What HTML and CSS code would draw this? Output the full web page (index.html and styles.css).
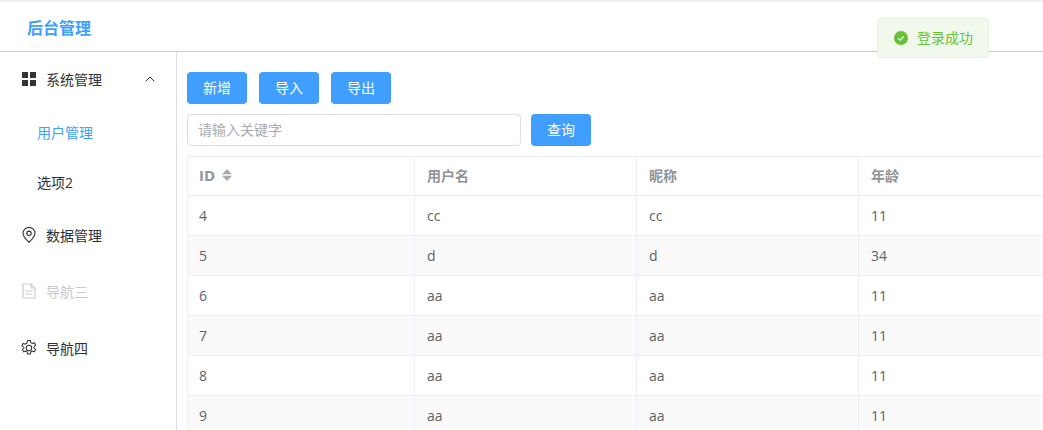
FILE: index.html
```html
<!DOCTYPE html>
<html lang="zh">
<head>
<meta charset="utf-8">
<title>后台管理</title>
<link rel="stylesheet" href="styles.css">
</head>
<body>
<div class="app">
  <header class="header"><span class="brand">后台管理</span></header>
  <div class="toast">
    <svg class="toast-icon" viewBox="0 0 14 14"><circle cx="7" cy="7" r="7" fill="#67c23a"/><path d="M4.2 7.2l2 1.9 3.6-3.6" fill="none" stroke="#f0f9eb" stroke-width="1.3"/></svg>
    <span class="toast-text">登录成功</span>
  </div>
  <div class="body">
    <nav class="side">
      <div class="menu">
      <div class="menu-item">
        <svg class="icon icon-grid" viewBox="0 0 14 14"><path fill="#333" d="M0 0h6v6H0zM8 0h6v6H8zM0 8h6v6H0zM8 8h6v6H8z"/></svg>
        <span class="grow">系统管理</span>
        <svg class="chev" viewBox="0 0 10 6"><path d="M.7 5.3L5 1l4.3 4.3" fill="none" stroke="#333" stroke-width="1"/></svg>
      </div>
      <div class="sub-item active">用户管理</div>
      <div class="sub-item">选项2</div>
      <div class="menu-item">
        <svg class="icon" viewBox="0 0 14 16"><path fill="none" stroke="#333" stroke-width="1.1" d="M7 15.300C4.600 12.800 1 9.800 1 6.200a6 5.700 0 0 1 12 0C13 9.800 9.400 12.800 7 15.300z"/><circle cx="7" cy="6.300" r="2.200" fill="none" stroke="#333" stroke-width="1.1"/></svg>
        <span>数据管理</span>
      </div>
      <div class="menu-item disabled">
        <svg class="icon" viewBox="0 0 14 16"><path fill="none" stroke="#ccc" stroke-width="1.200" d="M1 1h8l4 4v10H1zM9 1v4h4M3.500 8h7M3.500 11h7"/></svg>
        <span>导航三</span>
      </div>
      <div class="menu-item last">
        <svg class="icon" viewBox="0.5 0.200 15 15.400"><path fill="none" stroke="#333" stroke-width="1" d="M6.700 .7h2.600l.4 2 1.500.8 1.900-.7 1.300 2.300-1.500 1.300v1.600l1.500 1.300-1.300 2.300-1.900-.7-1.500.8-.4 2H6.700l-.4-2-1.500-.8-1.900.7-1.300-2.300 1.500-1.300V7.100L1.100 5.800l1.300-2.300 1.900.7 1.500-.8z"/><circle cx="8" cy="7.900" r="2.600" fill="none" stroke="#333" stroke-width="1"/></svg>
        <span>导航四</span>
      </div>
      </div>
    </nav>
    <main class="main">
      <div class="toolbar">
        <button class="btn">新增</button>
        <button class="btn">导入</button>
        <button class="btn">导出</button>
      </div>
      <div class="search">
        <input class="input" placeholder="请输入关键字">
        <button class="btn">查询</button>
      </div>
      <table class="table">
        <colgroup><col class="c1"><col class="c2"><col class="c3"><col class="c4"></colgroup>
        <thead>
          <tr>
            <th><span class="id-head">ID<svg class="sort" viewBox="0 0 10 12"><path fill="#a8abb2" d="M5 0l5 5.300H0zM5 12L0 6.700h10z"/></svg></span></th>
            <th>用户名</th><th>昵称</th><th>年龄</th>
          </tr>
        </thead>
        <tbody>
          <tr><td>4</td><td>cc</td><td>cc</td><td>11</td></tr>
          <tr><td>5</td><td>d</td><td>d</td><td>34</td></tr>
          <tr><td>6</td><td>aa</td><td>aa</td><td>11</td></tr>
          <tr><td>7</td><td>aa</td><td>aa</td><td>11</td></tr>
          <tr><td>8</td><td>aa</td><td>aa</td><td>11</td></tr>
          <tr><td>9</td><td>aa</td><td>aa</td><td>11</td></tr>
        </tbody>
      </table>
    </main>
  </div>
</div>
</body>
</html>
```
FILE: styles.css
```css
* { box-sizing: border-box; }
html, body { margin: 0; height: 100%; overflow: hidden; background: #fff; }
body { font-family: "Open Sans", "Noto Sans CJK SC", sans-serif; font-size: 14px; color: #303133; }
.app { position: relative; height: 430px; border-top: 2px solid #f0f0f0; }
.header { height: 50px; border-bottom: 1px solid #ccc; padding-left: 27px; display: flex; align-items: center; }
.brand { color: #409eff; font-size: 16px; font-weight: 700; }
.toast { position: absolute; left: 877px; top: 16px; width: 112px; height: 40px; display: flex; align-items: center; padding-left: 16px; gap: 9px; background: #f0f9eb; border: 1px solid #e1f3d8; border-radius: 4px; color: #67c23a; }
.toast-icon { width: 14px; height: 14px; flex: none; }
.toast-text { margin-top: -2px; }
.body { display: flex; height: 378px; }
.side { width: 177px; flex: none; border-right: 1px solid #dcdfe6; }
.menu { margin-top: -1px; }
.menu-item { height: 56px; display: flex; align-items: center; padding-left: 21px; color: #303133; }
.menu-item .icon { width: 16px; height: 16px; margin-right: 9px; flex: none; }
.menu-item .icon-grid { width: 14px; height: 14px; margin: 0 10px 0 1px; }
.last { padding-top: 2px; }
.grow { flex: 1; }
.chev { width: 10px; height: 6px; margin-right: 21px; }
.disabled { color: #c9c9c9; }
.sub-item { height: 50px; line-height: 52px; padding-left: 37px; }
.active { color: #409eff; }
.main { flex: 1; min-width: 0; padding: 20px 0 0 10px; overflow: hidden; }
.toolbar { display: flex; gap: 12px; margin-bottom: 10px; }
.btn { width: 60px; height: 32px; border: 0; border-radius: 4px; background: #409eff; color: #fff; font: inherit; padding: 0 0 2px; }
.search { display: flex; gap: 10px; margin-bottom: 10px; }
.input { width: 334px; height: 32px; border: 1px solid #dcdfe6; border-radius: 4px; padding: 0 10px 2px; font: inherit; color: #606266; outline: 0; }
.input::placeholder { color: #a8abb2; }
.table { border-collapse: collapse; table-layout: fixed; width: 1000px; }
.c1 { width: 227px; } .c2 { width: 222px; } .c3 { width: 222px; } .c4 { width: 329px; }
.table th, .table td { border: 1px solid #ebeef5; padding: 0 12px; text-align: left; height: 40px; color: #606266; }
.table th { color: #909399; font-weight: 700; height: 39px; padding-bottom: 2px; }
.table th:first-child, .table td:first-child { padding-left: 11px; }
.table tbody tr:nth-child(even) td { background: #fafafa; }
.id-head { display: inline-flex; align-items: center; gap: 7px; font-size: 15px; }
.sort { width: 10px; height: 12px; }
```
